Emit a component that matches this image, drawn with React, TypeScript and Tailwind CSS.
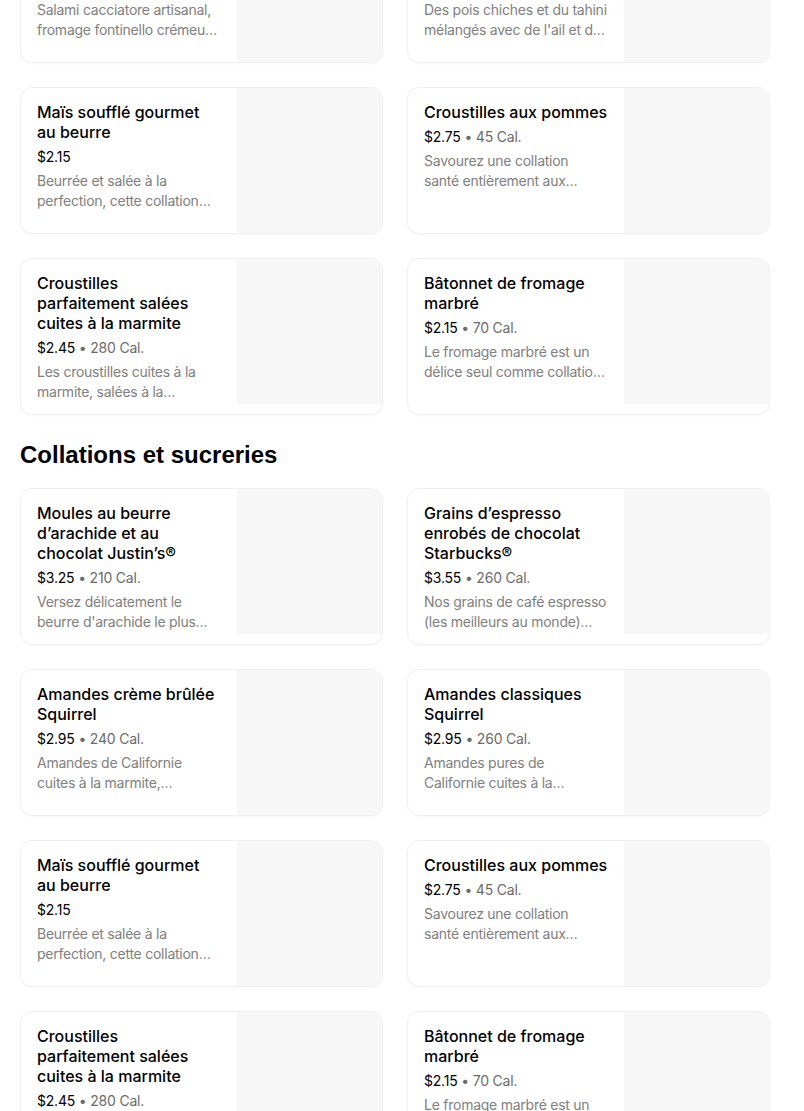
type Item = {
  title: string;
  price: string;
  cal?: string;
  desc: string;
};

// Descriptions carry their own line breaks: the reference clamps them to two
// lines and cuts the second one mid-word.
const topItems: Item[] = [
  {
    title: "Boîte protéinée salami et fromage",
    price: "$6.95",
    cal: "420 Cal.",
    desc: "Salami cacciatore artisanal,\nfromage fontinello crémeu…",
  },
  {
    title: "Houmous classique et bretzels",
    price: "$4.25",
    cal: "300 Cal.",
    desc: "Des pois chiches et du tahini\nmélangés avec de l'ail et d…",
  },
  {
    title: "Maïs soufflé gourmet au beurre",
    price: "$2.15",
    desc: "Beurrée et salée à la\nperfection, cette collation…",
  },
  {
    title: "Croustilles aux pommes",
    price: "$2.75",
    cal: "45 Cal.",
    desc: "Savourez une collation\nsanté entièrement aux…",
  },
  {
    title: "Croustilles\nparfaitement salées cuites à la marmite",
    price: "$2.45",
    cal: "280 Cal.",
    desc: "Les croustilles cuites à la\nmarmite, salées à la…",
  },
  {
    title: "Bâtonnet de fromage marbré",
    price: "$2.15",
    cal: "70 Cal.",
    desc: "Le fromage marbré est un\ndélice seul comme collatio…",
  },
];

const sweetItems: Item[] = [
  {
    title: "Moules au beurre d’arachide et au chocolat Justin’s®",
    price: "$3.25",
    cal: "210 Cal.",
    desc: "Versez délicatement le\nbeurre d'arachide le plus…",
  },
  {
    title: "Grains d’espresso enrobés de chocolat Starbucks®",
    price: "$3.55",
    cal: "260 Cal.",
    desc: "Nos grains de café espresso\n(les meilleurs au monde)…",
  },
  {
    title: "Amandes crème brûlée Squirrel",
    price: "$2.95",
    cal: "240 Cal.",
    desc: "Amandes de Californie\ncuites à la marmite,…",
  },
  {
    title: "Amandes classiques Squirrel",
    price: "$2.95",
    cal: "260 Cal.",
    desc: "Amandes pures de\nCalifornie cuites à la…",
  },
  ...topItems.slice(2),
];

function ItemCard({ item }: { item: Item }) {
  return (
    <div className="flex overflow-hidden rounded-xl border border-[#f0f0f0] bg-white shadow-[0_1px_2px_rgba(0,0,0,0.03)]">
      <div className="min-w-0 flex-1 px-4 pt-[14px] pb-3">
        <div className="whitespace-pre-line text-[16px] font-medium leading-5 text-black">{item.title}</div>
        <div className="mt-[5px] text-[14px] leading-5 tracking-[-0.2px]">
          <span className="text-black">{item.price}</span>
          {item.cal && (
            <span className="text-[#6b6b6b]">
              {" • "}
              {item.cal}
            </span>
          )}
        </div>
        <div className="mt-1 whitespace-pre text-[14px] leading-5 tracking-[-0.25px] text-[#808080]">{item.desc}</div>
      </div>
      <div className="h-[145px] w-[145px] shrink-0 self-start bg-[#f7f7f7]" />
    </div>
  );
}

export default function App() {
  return (
    <div className="h-[1111px] overflow-hidden bg-white font-['Inter',sans-serif]">
      <div className="-mt-[84px] ml-5 w-[750px]">
        <div className="grid grid-cols-2 gap-6">
          {topItems.map((item, i) => (
            <ItemCard key={i} item={item} />
          ))}
        </div>

        <h2 className="mt-6 mb-[17px] font-['Liberation_Sans',Arial,sans-serif] text-2xl leading-8 font-bold text-black">
          Collations et sucreries
        </h2>

        <div className="grid grid-cols-2 gap-6">
          {sweetItems.map((item, i) => (
            <ItemCard key={i} item={item} />
          ))}
        </div>
      </div>
    </div>
  );
}
